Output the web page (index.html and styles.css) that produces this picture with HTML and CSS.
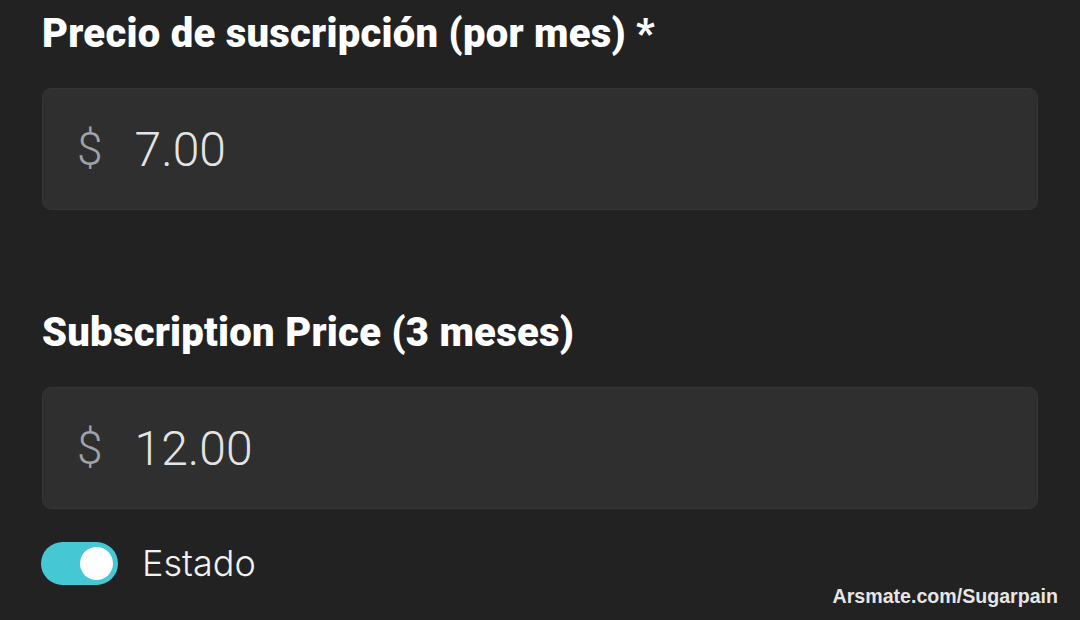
FILE: index.html
```html
<!DOCTYPE html>
<html>
<head>
<meta charset="utf-8">
<link rel="stylesheet" href="styles.css">
</head>
<body>
<main class="form">
  <section class="field">
    <h2 class="label">Precio de suscripción (por mes) *</h2>
    <div class="input">
      <span class="currency">$</span>
      <span class="value">7.00</span>
    </div>
  </section>
  <section class="field field-second">
    <h2 class="label">Subscription Price (3 meses)</h2>
    <div class="input">
      <span class="currency">$</span>
      <span class="value">12.00</span>
    </div>
  </section>
  <div class="status">
    <span class="toggle"><span class="knob"></span></span>
    <span class="status-text">Estado</span>
  </div>
</main>
<div class="watermark">Arsmate.com/Sugarpain</div>
</body>
</html>
```
FILE: styles.css
```css
html, body {
  margin: 0;
  padding: 0;
  background: #222222;
  width: 1080px;
  height: 620px;
  overflow: hidden;
  position: relative;
}
.form {
  padding: 10px 42px 0 42px;
  display: flex;
  flex-direction: column;
}
.field {
  display: flex;
  flex-direction: column;
}
.field-second {
  margin-top: 99px;
}
.label {
  margin: 0;
  font-family: Roboto, "Noto Sans", sans-serif;
  font-weight: 900;
  font-size: 40px;
  line-height: 48px;
  letter-spacing: 0.25px;
  color: #ffffff;
}
.input {
  margin-top: 30px;
  height: 122px;
  box-sizing: border-box;
  background: #2f2f2f;
  border: 1px solid #353535;
  border-radius: 9px;
  display: flex;
  align-items: center;
  padding-left: 34px;
  gap: 32px;
}
.currency {
  font-family: Roboto, Inter, sans-serif;
  font-weight: 300;
  font-size: 46px;
  color: #9ea3a8;
}
.value {
  font-family: Roboto, Inter, sans-serif;
  font-weight: 300;
  font-size: 48px;
  color: #e4e4e4;
}
.status {
  margin-top: 32px;
  margin-left: -1px;
  display: flex;
  align-items: center;
  gap: 24px;
}
.toggle {
  width: 77px;
  height: 43px;
  border-radius: 22px;
  background: #45c8d4;
  display: flex;
  align-items: center;
  justify-content: flex-end;
  padding-right: 5px;
  box-sizing: border-box;
}
.knob {
  width: 33px;
  height: 33px;
  border-radius: 50%;
  background: #ffffff;
}
.status-text {
  font-family: Inter, Roboto, sans-serif;
  font-weight: 300;
  font-size: 36px;
  color: #f2f2f2;
}
.watermark {
  position: absolute;
  right: 22px;
  bottom: 12px;
  font-family: "Liberation Sans", Arial, sans-serif;
  font-weight: 700;
  font-size: 19.6px;
  color: #e6e6e6;
}
```
